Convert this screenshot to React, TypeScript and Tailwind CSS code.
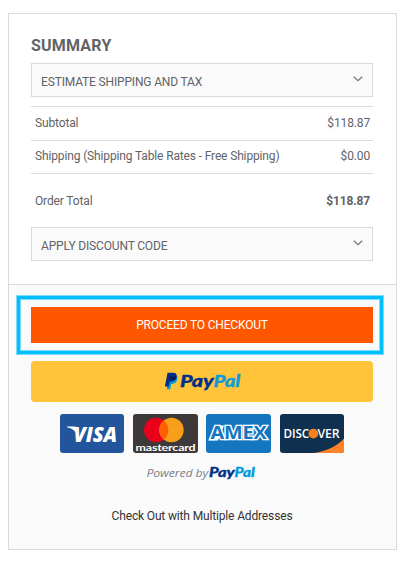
const totals = [
  { label: "Subtotal", amount: "$118.87", row: "h-[34px] border-t border-[#d9dbdf] pb-[2px]" },
  { label: "Shipping (Shipping Table Rates - Free Shipping)", amount: "$0.00", row: "h-[33px] border-t border-[#d9dbdf] pb-[2px]" },
];

function Chevron() {
  return (
    <svg width="10" height="6" viewBox="0 0 10 6" className="mb-[3px]" fill="none" stroke="#757575" strokeWidth="1.2">
      <path d="M0.800 0.800 5 4.600 9.200 0.800" />
    </svg>
  );
}

function Panel({ title }: { title: string }) {
  return (
    <button className="flex h-[34px] w-full items-center justify-between border border-[#d9dadb] bg-[#fafafa] pr-[9px] pl-[9px]">
      <span className="pt-[3px] text-[12px] tracking-[-0.16px]">{title}</span>
      <Chevron />
    </button>
  );
}

function PayPalButton() {
  return (
    <button className="mt-[18px] flex h-[41px] w-full items-center justify-center rounded bg-[#ffc43a]" aria-label="PayPal">
      <svg width="78" height="31" viewBox="0 0 78 31" className="overflow-visible">
        <path d="M5 9h6.200c2.500.6 2.900 2.300 2.400 4.200-.7 3-2.500 4.300-5.200 4.300H7.500L6.700 22.800H3.300z" fill="#009cde" transform="translate(.6 .4)" />
        <path d="M3.900 6.800h5.700c3 0 4 1.700 3.400 4.300-.7 3-2.700 4.300-5.500 4.300H6L5.100 20.600H1.300z" fill="#003087" transform="translate(.6 0)" />
        <path d="M6.200 9.900h5.900c.8 0 1 .2.900.9-.6 3.300-2.600 4.600-5.400 4.600H6L5.600 17z" fill="#012169" transform="translate(.6 0)" />
        <g fontFamily="Lato, sans-serif" fontWeight="900" fontStyle="italic" fontSize="17" strokeWidth="0.300">
          <text x="17" y="20.800" textLength="33.500" lengthAdjust="spacingAndGlyphs" fill="#003087" stroke="#003087">Pay</text>
          <text x="50.500" y="20.800" textLength="26.500" lengthAdjust="spacingAndGlyphs" fill="#109cd8" stroke="#109cd8">Pal</text>
        </g>
      </svg>
    </button>
  );
}

function Cards() {
  return (
    <div className="mt-3 flex h-[39px] pl-[29px]">
      <svg width="64" height="39" viewBox="0 0 64 39">
        <rect width="64" height="39" rx="3" fill="#22559c" />
        <path d="M7 12.600h7.500c1 0 1.500.5 1.700 1.500l1.500 7C15.500 17 12 14.300 7 13.200z" fill="#fff" />
        <text x="13.500" y="27.600" textLength="43.500" lengthAdjust="spacingAndGlyphs" fill="#fff" fontFamily="Open Sans, sans-serif" fontWeight="800" fontStyle="italic" fontSize="21">VISA</text>
      </svg>
      <svg width="65" height="39" viewBox="0 0 65 39" className="ml-[9px]">
        <rect width="65" height="39" rx="3" fill="#3c3938" />
        <circle cx="23.200" cy="16" r="12.200" fill="#eb001b" />
        <circle cx="38.500" cy="16" r="12.200" fill="#f79e1b" />
        <path d="M30.850 6.500a12.200 12.200 0 0 1 0 19 12.200 12.200 0 0 1 0-19" fill="#ff5f00" />
        <text x="2.500" y="36.500" textLength="60" lengthAdjust="spacingAndGlyphs" fill="#fff" fontFamily="Lato, sans-serif" fontWeight="700" fontSize="10">mastercard</text>
      </svg>
      <svg width="65" height="39" viewBox="0 0 65 39" className="ml-2">
        <rect width="65" height="39" rx="3" fill="#1476bf" />
        {/* the outline fills the slope left of the A and is drawn under the letters */}
        <path d="M2.500 26.500 10.500 11.500H18L12 26.500z" fill="#fff" />
        <text x="4.500" y="25" textLength="56" lengthAdjust="spacingAndGlyphs" fill="#1476bf" stroke="#fff" strokeWidth="2.600" paintOrder="stroke" fontFamily="Open Sans, sans-serif" fontWeight="700" fontSize="17">AMEX</text>
      </svg>
      <svg width="64" height="39" viewBox="0 0 64 39" className="ml-[9px]">
        <rect width="64" height="39" rx="3" fill="#10304f" />
        <path d="M34 39C48 36.500 58 31.500 64 24.500V36a3 3 0 0 1-3 3z" fill="#ff8129" />
        <g fill="#fff" fontFamily="Open Sans, sans-serif" fontWeight="600" fontSize="13">
          <text x="3.500" y="24.200" textLength="25.500" lengthAdjust="spacingAndGlyphs">DISC</text>
          <text x="37.500" y="24.200" textLength="22" lengthAdjust="spacingAndGlyphs">VER</text>
        </g>
        <circle cx="33.400" cy="19.600" r="4.900" fill="#f58220" />
      </svg>
    </div>
  );
}

export default function App() {
  return (
    <div className="h-[561px] bg-white pt-[13px] pl-2 font-['Roboto',sans-serif] text-[12px] tracking-[-0.14px] text-[#626366]">
      <div className="flex h-[537px] w-[389px] flex-col border border-[#d9dadb]">
        <div className="h-[270px] pr-[23px] pl-[22px]">
          <h2 className="h-[49px] pt-[22px] text-[16px] leading-[20px] font-bold tracking-[0.2px]">SUMMARY</h2>
          <Panel title="ESTIMATE SHIPPING AND TAX" />
          <div className="mt-[9px]">
            {totals.map((t) => (
              <div key={t.label} className={`flex items-center justify-between pr-[3px] pl-1 ${t.row}`}>
                <span>{t.label}</span>
                <span>{t.amount}</span>
              </div>
            ))}
            <div className="flex h-[54px] items-center justify-between border-t border-[#d9dbdf] pr-[3px] pl-1">
              <span>Order Total</span>
              <strong className="font-bold">$118.87</strong>
            </div>
          </div>
          <Panel title="APPLY DISCOUNT CODE" />
        </div>

        <div className="flex-1 border-t border-[#d9dadb] bg-[#fafafa] pt-[22px] pr-[23px] pl-[22px]">
          <div className="relative">
            <button className="flex h-9 w-full items-center justify-center bg-[#ff5600] tracking-[-0.18px] text-white">
              PROCEED TO CHECKOUT
            </button>
            {/* highlight around the checkout button */}
            <div className="pointer-events-none absolute -top-[11px] -right-[10px] -bottom-[11px] -left-[14px] border-3 border-[#00bfff] shadow-[0_0_0_1px_#7ddcfc,inset_0_0_0_1px_#7ddcfc]" />
          </div>
          <PayPalButton />
          <Cards />
          <div className="mt-[10px] flex justify-center">
            <svg width="110" height="20" viewBox="0 0 110 20" className="overflow-visible">
              <text x="-0.500" y="14" textLength="61.500" lengthAdjust="spacingAndGlyphs" fill="#7b8388" fontFamily="Open Sans, sans-serif" fontStyle="italic" fontSize="11.500">Powered by</text>
              <g fontFamily="Lato, sans-serif" fontWeight="900" fontStyle="italic" fontSize="13" strokeWidth="0.300">
                <text x="62" y="14" textLength="25.500" lengthAdjust="spacingAndGlyphs" fill="#003087" stroke="#003087">Pay</text>
                <text x="87.500" y="14" textLength="20" lengthAdjust="spacingAndGlyphs" fill="#009cde" stroke="#009cde">Pal</text>
              </g>
            </svg>
          </div>
          <a className="mt-[24px] block text-center leading-[18px] tracking-[-0.15px] text-[#333]">Check Out with Multiple Addresses</a>
        </div>
      </div>
    </div>
  );
}
